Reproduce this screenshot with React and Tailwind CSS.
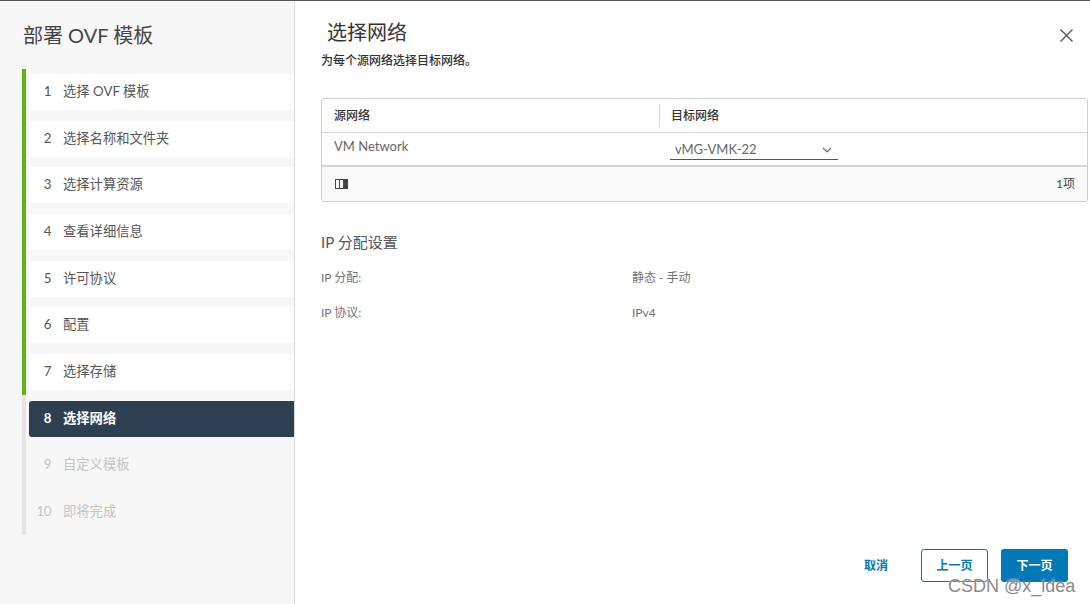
const steps = [
  { n: '1', label: '选择 OVF 模板', state: 'done' },
  { n: '2', label: '选择名称和文件夹', state: 'done' },
  { n: '3', label: '选择计算资源', state: 'done' },
  { n: '4', label: '查看详细信息', state: 'done' },
  { n: '5', label: '许可协议', state: 'done' },
  { n: '6', label: '配置', state: 'done' },
  { n: '7', label: '选择存储', state: 'done' },
  { n: '8', label: '选择网络', state: 'current' },
  { n: '9', label: '自定义模板', state: 'todo' },
  { n: '10', label: '即将完成', state: 'todo' },
];

const font = { fontFamily: 'Lato, "Noto Sans CJK SC", sans-serif' };

function StepItem({ step }) {
  const border = step.state === 'done' ? 'border-[#60b515]' : 'border-[#e4e4e4]';
  let row = 'bg-white text-[#565656]';
  if (step.state === 'current') row = 'bg-[#2d3f50] text-white font-bold rounded-l-[3px]';
  if (step.state === 'todo') row = 'text-[#c4c4c4]';

  return (
    <div className={`border-l-[4px] ${border} pl-[3px] py-[5.35px]`}>
      <div className={`h-[36px] flex items-center text-[13.3px] ${row}`}>
        <span className="w-[22px] text-right tracking-[-0.5px]">{step.n}</span>
        <span className="ml-[12px]">{step.label}</span>
      </div>
    </div>
  );
}

function ColumnToggleIcon() {
  return (
    <svg width="13" height="10" viewBox="0 0 13 10">
      <rect x="0.5" y="0.5" width="12" height="9" fill="none" stroke="#444" />
      <line x1="4.5" y1="0.5" x2="4.5" y2="9.5" stroke="#444" />
      <rect x="8" y="0.5" width="4.5" height="9" fill="#444" />
    </svg>
  );
}

export default function App() {
  return (
    <div className="relative w-[1090px] h-[604px] flex border-t border-[#555] bg-white overflow-hidden" style={font}>
      {/* Wizard steps */}
      <div className="w-[295px] shrink-0 bg-[#f7f7f7] border-r border-[#dcdcdc]">
        <h1 className="pl-[23px] pt-[19px] text-[20px] leading-[30px] text-[#454545]">部署 OVF 模板</h1>
        <div className="ml-[22px] mt-[18.5px]">
          {steps.map((s) => (
            <StepItem key={s.n} step={s} />
          ))}
        </div>
      </div>

      {/* Content */}
      <div className="flex-1 flex flex-col">
        <div className="flex items-start justify-between">
          <h2 className="ml-[32px] mt-[17px] text-[20px] leading-[28px] text-[#333]">选择网络</h2>
          <button className="mt-[27px] mr-[16px] p-0">
            <svg width="15" height="15" viewBox="0 0 15 15">
              <path d="M1.5 1.5 L13.5 13.5 M13.5 1.5 L1.5 13.5" stroke="#555" strokeWidth="1.4" />
            </svg>
          </button>
        </div>
        <p className="ml-[26px] mt-[7px] text-[12px] leading-[16px] font-medium text-[#333]">为每个源网络选择目标网络。</p>

        {/* Network table */}
        <div className="ml-[26px] mr-[2px] mt-[29px] border border-[#cfcfcf] rounded-[3px] text-[12px]">
          <div className="h-[34px] flex items-center border-b border-[#d7d7d7] font-medium text-[#333]">
            <div className="w-[337px] pl-[12px]">源网络</div>
            <div className="h-[23px] border-l border-[#d7d7d7] flex items-center pl-[11px]">目标网络</div>
          </div>
          <div className="h-[34px] flex border-b-2 border-[#d4d4d4]">
            <div className="w-[337px] pl-[12px] pt-[4px] text-[13px] text-[#666]">VM Network</div>
            <div className="pl-[11px] pt-[7px]">
              <div className="w-[168px] h-[20px] flex items-center justify-between border-b border-[#555] pl-[5px] pr-[6px] text-[13px] text-[#666]">
                <span>vMG-VMK-22</span>
                <svg width="10" height="6" viewBox="0 0 10 6">
                  <path d="M1 1 L5 5 L9 1" fill="none" stroke="#666" strokeWidth="1.1" />
                </svg>
              </div>
            </div>
          </div>
          <div className="h-[34px] flex items-center justify-between bg-[#fafafa] pl-[13px] pr-[12px] text-[#444] rounded-b-[3px]">
            <ColumnToggleIcon />
            <span>1项</span>
          </div>
        </div>

        {/* IP allocation */}
        <h3 className="ml-[26px] mt-[29px] text-[15px] leading-[22px] text-[#565656]">IP 分配设置</h3>
        <div className="ml-[26px] mt-[15px] text-[12px] text-[#737373]">
          <div className="flex h-[20px] items-center">
            <span className="w-[311px]">IP 分配:</span>
            <span>静态 - 手动</span>
          </div>
          <div className="flex h-[20px] items-center mt-[15px]">
            <span className="w-[311px]">IP 协议:</span>
            <span>IPv4</span>
          </div>
        </div>

        <div className="flex-1" />

        {/* Footer buttons */}
        <div className="flex items-center justify-end gap-[13px] mr-[22px] mb-[22px] text-[12px] font-bold">
          <button className="h-[33px] px-[12px] mr-[8px] text-[#0079b8]">取消</button>
          <button className="h-[33px] w-[67px] border border-[#0079b8] rounded-[3px] text-[#0079b8] bg-white">上一页</button>
          <button className="h-[33px] w-[67px] rounded-[3px] bg-[#0079b8] text-white">下一页</button>
        </div>
      </div>

      {/* Watermark */}
      <div
        className="absolute left-[948px] top-[572px] text-[18px] text-[#8a8a8a] pointer-events-none"
        style={{ fontFamily: '"Liberation Sans", sans-serif', textShadow: '0 0 2px #fff' }}
      >
        CSDN @x_idea
      </div>
    </div>
  );
}
